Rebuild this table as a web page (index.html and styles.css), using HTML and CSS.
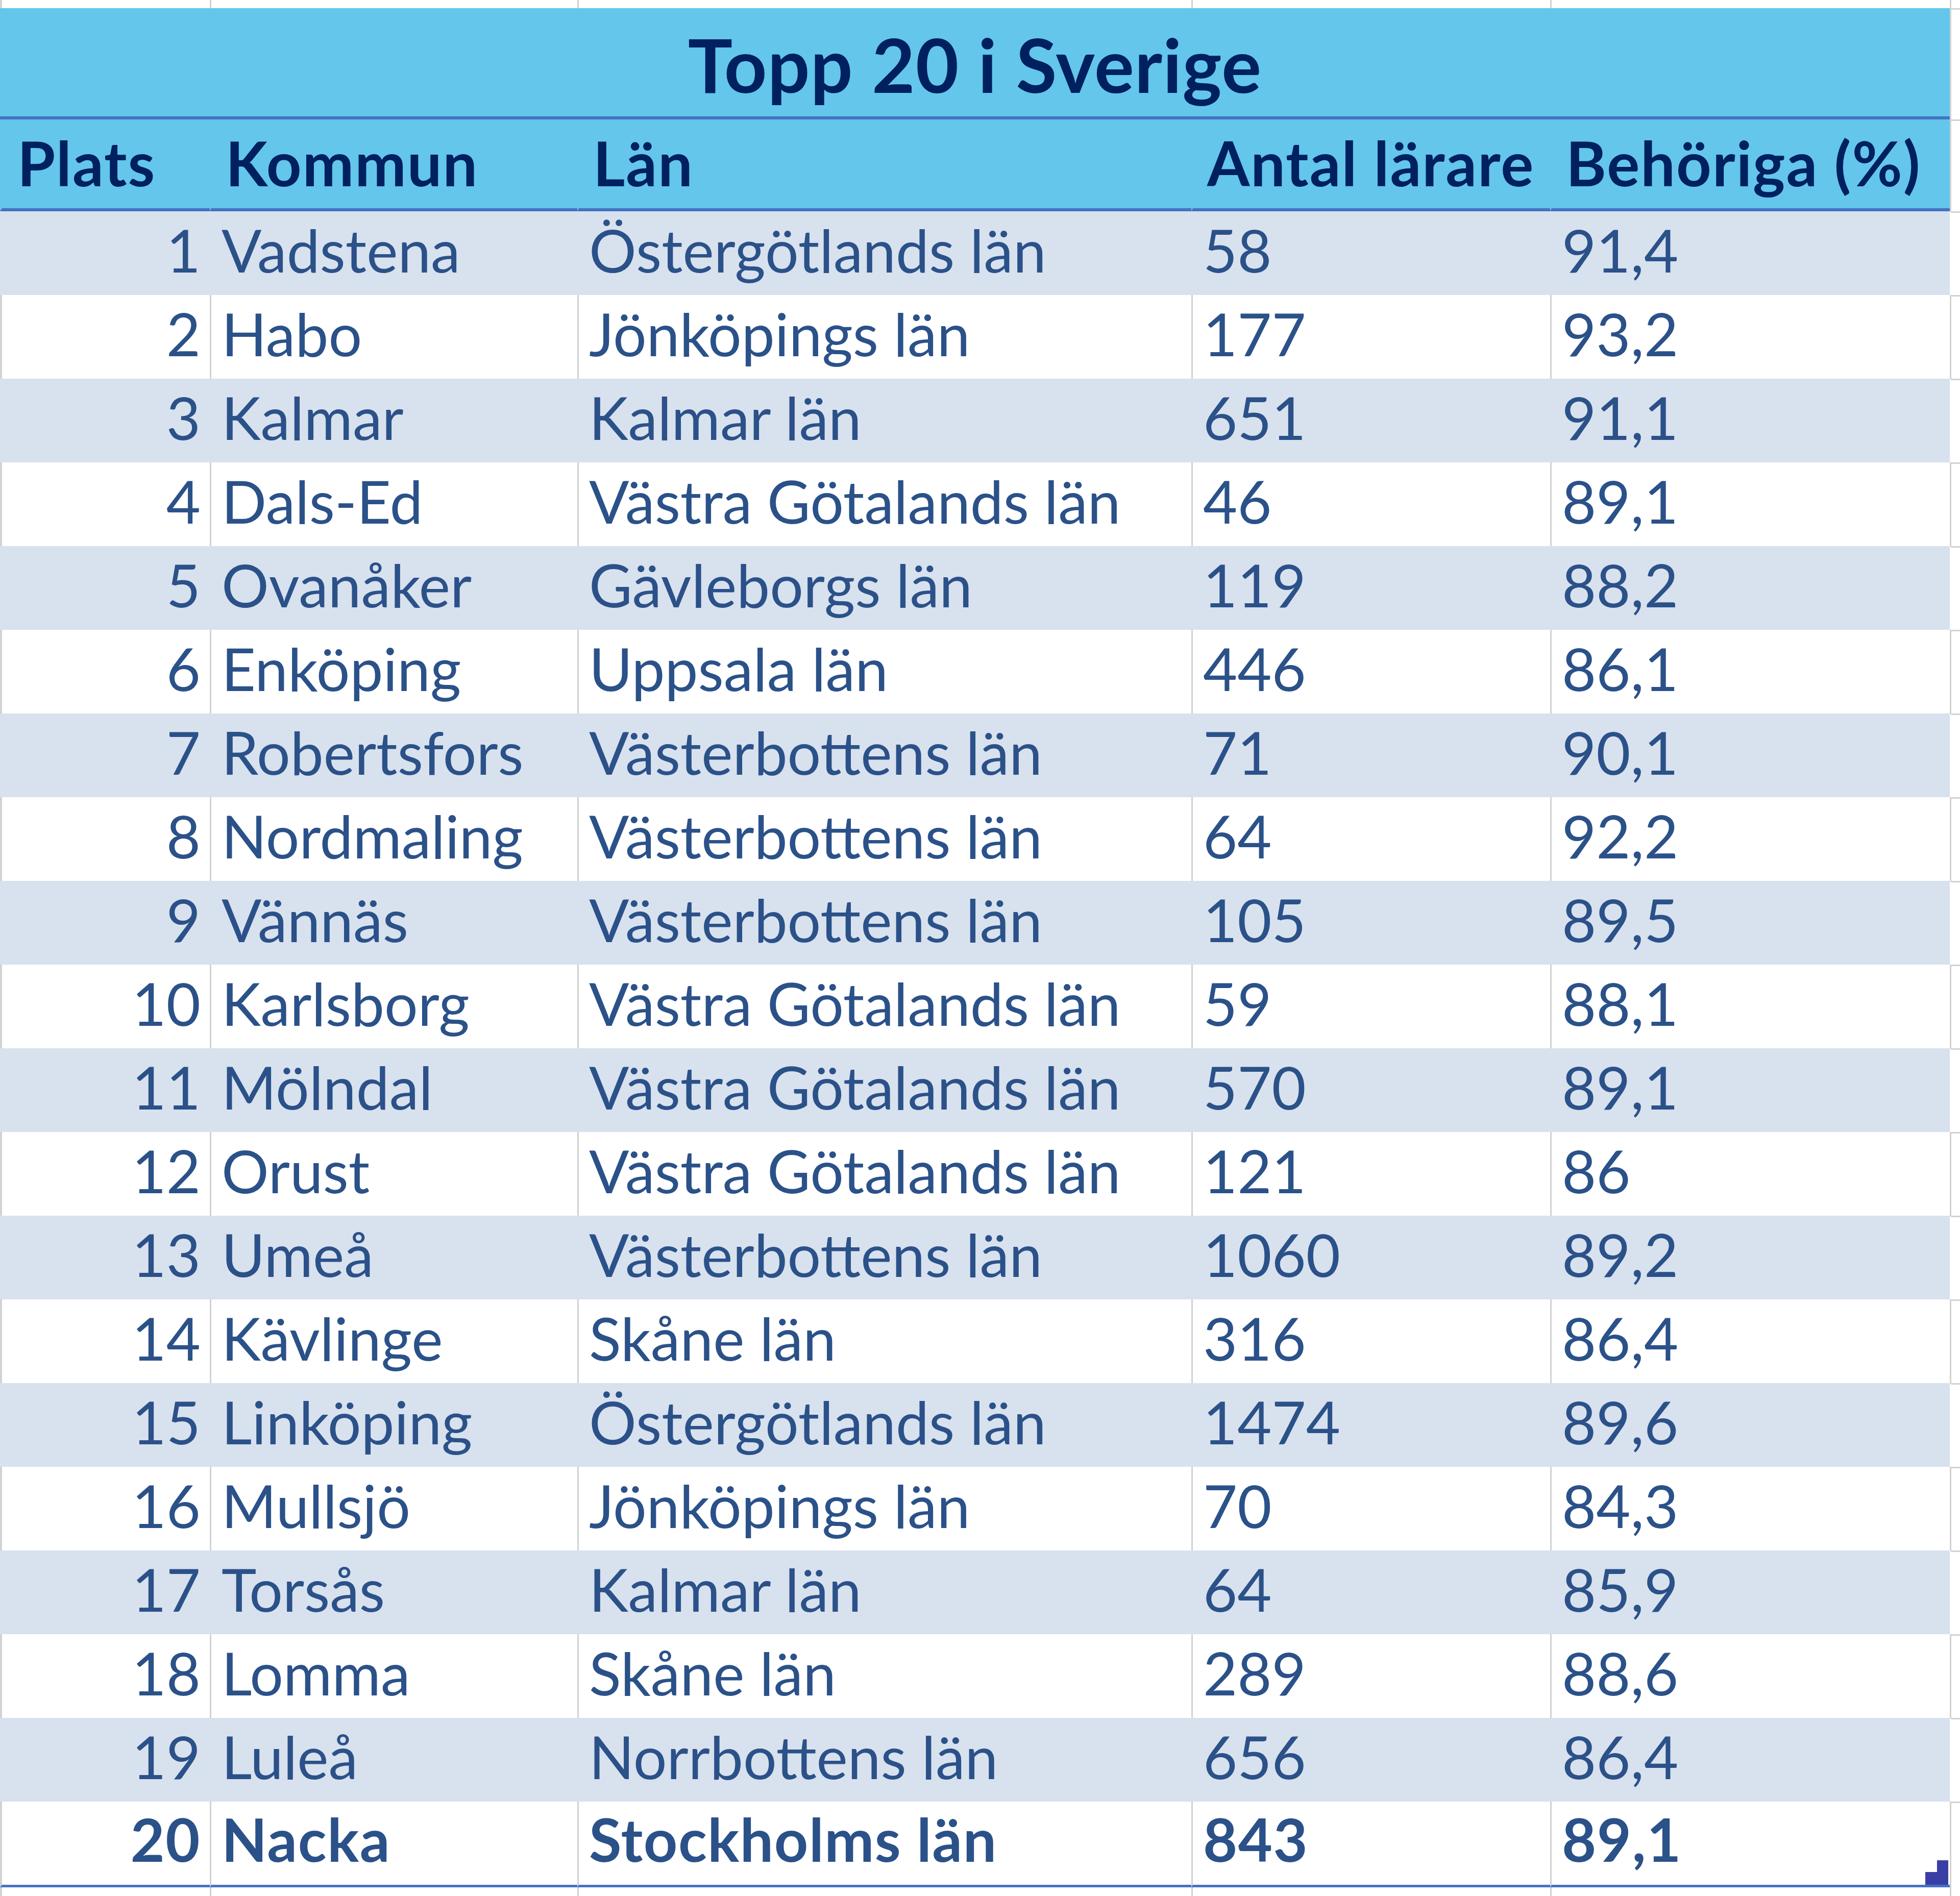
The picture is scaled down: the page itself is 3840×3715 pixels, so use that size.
FILE: index.html
```html
<!DOCTYPE html>
<html lang="sv">
<head>
<meta charset="utf-8">
<title>Topp 20 i Sverige</title>
<link rel="stylesheet" href="styles.css">
</head>
<body>
<div class="sheet">
  <div class="row strip"><div class="c"></div><div class="c"></div><div class="c"></div><div class="c"></div><div class="c"></div><div class="c f"></div></div>
  <div class="row title-row"><div class="title">Topp 20 i Sverige</div><div class="c f"></div></div>
  <div class="row head-row">
    <div class="c">Plats</div><div class="c">Kommun</div><div class="c">Län</div><div class="c">Antal lärare</div><div class="c">Behöriga (%)</div><div class="c f"></div>
  </div>
  <div class="row band"><div class="c num">1</div><div class="c">Vadstena</div><div class="c">Östergötlands län</div><div class="c">58</div><div class="c">91,4</div><div class="c f"></div></div>
  <div class="row"><div class="c num">2</div><div class="c">Habo</div><div class="c">Jönköpings län</div><div class="c">177</div><div class="c">93,2</div><div class="c f"></div></div>
  <div class="row band"><div class="c num">3</div><div class="c">Kalmar</div><div class="c">Kalmar län</div><div class="c">651</div><div class="c">91,1</div><div class="c f"></div></div>
  <div class="row"><div class="c num">4</div><div class="c">Dals-Ed</div><div class="c">Västra Götalands län</div><div class="c">46</div><div class="c">89,1</div><div class="c f"></div></div>
  <div class="row band"><div class="c num">5</div><div class="c">Ovanåker</div><div class="c">Gävleborgs län</div><div class="c">119</div><div class="c">88,2</div><div class="c f"></div></div>
  <div class="row"><div class="c num">6</div><div class="c">Enköping</div><div class="c">Uppsala län</div><div class="c">446</div><div class="c">86,1</div><div class="c f"></div></div>
  <div class="row band"><div class="c num">7</div><div class="c">Robertsfors</div><div class="c">Västerbottens län</div><div class="c">71</div><div class="c">90,1</div><div class="c f"></div></div>
  <div class="row"><div class="c num">8</div><div class="c">Nordmaling</div><div class="c">Västerbottens län</div><div class="c">64</div><div class="c">92,2</div><div class="c f"></div></div>
  <div class="row band"><div class="c num">9</div><div class="c">Vännäs</div><div class="c">Västerbottens län</div><div class="c">105</div><div class="c">89,5</div><div class="c f"></div></div>
  <div class="row"><div class="c num">10</div><div class="c">Karlsborg</div><div class="c">Västra Götalands län</div><div class="c">59</div><div class="c">88,1</div><div class="c f"></div></div>
  <div class="row band"><div class="c num">11</div><div class="c">Mölndal</div><div class="c">Västra Götalands län</div><div class="c">570</div><div class="c">89,1</div><div class="c f"></div></div>
  <div class="row"><div class="c num">12</div><div class="c">Orust</div><div class="c">Västra Götalands län</div><div class="c">121</div><div class="c">86</div><div class="c f"></div></div>
  <div class="row band"><div class="c num">13</div><div class="c">Umeå</div><div class="c">Västerbottens län</div><div class="c">1060</div><div class="c">89,2</div><div class="c f"></div></div>
  <div class="row"><div class="c num">14</div><div class="c">Kävlinge</div><div class="c">Skåne län</div><div class="c">316</div><div class="c">86,4</div><div class="c f"></div></div>
  <div class="row band"><div class="c num">15</div><div class="c">Linköping</div><div class="c">Östergötlands län</div><div class="c">1474</div><div class="c">89,6</div><div class="c f"></div></div>
  <div class="row"><div class="c num">16</div><div class="c">Mullsjö</div><div class="c">Jönköpings län</div><div class="c">70</div><div class="c">84,3</div><div class="c f"></div></div>
  <div class="row band"><div class="c num">17</div><div class="c">Torsås</div><div class="c">Kalmar län</div><div class="c">64</div><div class="c">85,9</div><div class="c f"></div></div>
  <div class="row"><div class="c num">18</div><div class="c">Lomma</div><div class="c">Skåne län</div><div class="c">289</div><div class="c">88,6</div><div class="c f"></div></div>
  <div class="row band"><div class="c num">19</div><div class="c">Luleå</div><div class="c">Norrbottens län</div><div class="c">656</div><div class="c">86,4</div><div class="c f"></div></div>
  <div class="row total"><div class="c num">20</div><div class="c">Nacka</div><div class="c">Stockholms län</div><div class="c">843</div><div class="c sel">89,1<span class="handle"></span></div><div class="c f"></div></div>
  <div class="row strip bottom"><div class="c"></div><div class="c"></div><div class="c"></div><div class="c"></div><div class="c"></div><div class="c f"></div></div>
</div>
</body>
</html>
```

FILE: styles.css
```css
:root {
  --grid: #d2d2d2;
  --head: #63c6ea;
  --line: #4472c4;
  --band: #d8e1ee;
  --text: #2b5189;
  --navy: #002060;
}

* { box-sizing: border-box; }

html, body {
  margin: 0;
  padding: 0;
  background: #ffffff;
}

body {
  width: 3840px;
  height: 3715px;
  overflow: hidden;
  font-family: Lato, "Liberation Sans", sans-serif;
  color: var(--text);
}

.sheet {
  display: flex;
  flex-direction: column;
}

.row {
  display: grid;
  grid-template-columns: 411px 720px 1203px 703px 783px 1fr;
  height: 164px;
}

.c {
  display: flex;
  align-items: center;
  padding: 0 0 14px 20px;
  border-left: 3px solid var(--grid);
  font-size: 116px;
  white-space: nowrap;
  overflow: visible;
}

.c:first-child { border-left-width: 4px; }

.c.num {
  justify-content: flex-end;
  padding-right: 18px;
  padding-left: 0;
}

.c.f {
  padding: 0;
  border-top: 3px solid var(--grid);
}

.band .c:not(.f) {
  background: var(--band);
  border-left-color: transparent;
}

.band .c.f { border-left-color: transparent; }

/* top / bottom slivers of the grid */
.strip { height: 16px; }
.strip .c { padding: 0; }
.strip .c.f { border-top: none; }
.strip.bottom { height: 17px; }

/* title band */
.title-row { height: 218px; }
.title {
  grid-column: 1 / 6;
  display: flex;
  align-items: center;
  justify-content: center;
  padding-top: 6px;
  background: var(--head);
  border-bottom: 6px solid var(--line);
  color: var(--navy);
  font-weight: 700;
  font-size: 146px;
  letter-spacing: 1px;
}

/* header row */
.head-row { height: 180px; }
.head-row .c:not(.f) {
  background: var(--head);
  border-left-color: transparent;
  border-bottom: 6px solid var(--line);
  color: var(--navy);
  font-weight: 700;
  padding-left: 28px;
  padding-bottom: 4px;
  font-size: 120px;
  letter-spacing: 2px;
}
.head-row .c:first-child { padding-left: 30px; }

/* last row */
.total { height: 168px; }
.total .c:not(.f) {
  font-weight: 700;
  letter-spacing: 1.5px;
  border-bottom: 5px solid var(--line);
  padding-bottom: 16px;
}

.sel { position: relative; }
.handle {
  position: absolute;
  right: 3px;
  bottom: 0;
  width: 45px;
  height: 48px;
  background: #3a3fa6;
  clip-path: polygon(51% 0, 100% 0, 100% 100%, 0 100%, 0 48%, 51% 48%);
}
```
